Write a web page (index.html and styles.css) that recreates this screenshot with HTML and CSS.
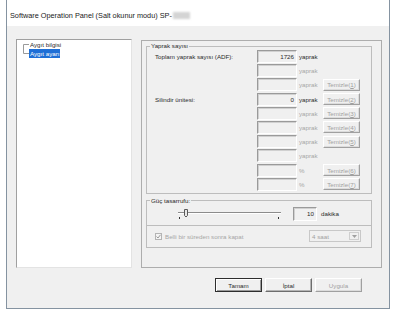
FILE: index.html
```html
<!DOCTYPE html>
<html lang="tr">
<head>
  <meta charset="UTF-8">
  <title>Software Operation Panel</title>
  <link rel="stylesheet" href="styles.css">
</head>
<body>

  <div class="window">
    <div class="titlebar">Software Operation Panel (Salt okunur modu) SP-<span class="redacted"></span></div>

    <div class="dialog">
      <div class="main">

        <!-- device tree -->
        <div class="tree">
          <svg class="tree-lines" width="6" height="19" viewBox="0 0 6 19">
            <path d="M0.5 4.5 H6 M0.5 4.5 V13.5 H6" fill="none" stroke="#9a9a9a" stroke-width="1"/>
          </svg>
          <ul class="tree-list">
            <li>Aygıt bilgisi</li>
            <li><span class="selected">Aygıt ayarı</span></li>
          </ul>
        </div>

        <!-- settings panel -->
        <div class="panel">
          <fieldset class="group">
            <legend>Yaprak sayısı</legend>
            <div class="counter-grid">
              <div class="label">Toplam yaprak sayısı (ADF):</div>
              <div class="box">1726</div>
              <div class="unit">yaprak</div>
              <div></div>

              <div></div>
              <div class="box"></div>
              <div class="unit dim">yaprak</div>
              <div></div>

              <div></div>
              <div class="box"></div>
              <div class="unit dim">yaprak</div>
              <button class="btn-clear" disabled>Temizle(<u>1</u>)</button>

              <div class="label">Silindir ünitesi:</div>
              <div class="box">0</div>
              <div class="unit">yaprak</div>
              <button class="btn-clear" disabled>Temizle(<u>2</u>)</button>

              <div></div>
              <div class="box"></div>
              <div class="unit dim">yaprak</div>
              <button class="btn-clear" disabled>Temizle(<u>3</u>)</button>

              <div></div>
              <div class="box"></div>
              <div class="unit dim">yaprak</div>
              <button class="btn-clear" disabled>Temizle(<u>4</u>)</button>

              <div></div>
              <div class="box"></div>
              <div class="unit dim">yaprak</div>
              <button class="btn-clear" disabled>Temizle(<u>5</u>)</button>

              <div></div>
              <div class="box"></div>
              <div class="unit dim">yaprak</div>
              <div></div>

              <div></div>
              <div class="box"></div>
              <div class="unit dim">%</div>
              <button class="btn-clear" disabled>Temizle(<u>6</u>)</button>

              <div></div>
              <div class="box"></div>
              <div class="unit dim">%</div>
              <button class="btn-clear" disabled>Temizle(<u>7</u>)</button>
            </div>
          </fieldset>

          <fieldset class="group power">
            <legend>Güç tasarrufu:</legend>
            <div class="power-main">
              <svg class="slider" width="108" height="14" viewBox="0 0 108 14">
                <line x1="2" y1="6.5" x2="105" y2="6.5" stroke="#8c8c8c"/>
                <line x1="2" y1="7.5" x2="105" y2="7.5" stroke="#ffffff"/>
                <path d="M8.5 3.5 H11.5 V9.5 L10 11 L8.5 9.5 Z" fill="#e8e8e8" stroke="#5a5a5a"/>
                <line x1="3.5" y1="11" x2="3.5" y2="13" stroke="#333"/>
                <line x1="102.5" y1="11" x2="102.5" y2="13" stroke="#333"/>
              </svg>
              <div class="box minutes">10</div>
              <span class="minutes-unit">dakika</span>
            </div>
            <div class="power-opt">
              <span class="checkbox">
                <svg width="5" height="5" viewBox="0 0 5 5"><path d="M0.5 2.5 L2 4 L4.5 0.8" fill="none" stroke="#9a9a9a" stroke-width="1"/></svg>
              </span>
              <span class="dim">Belli bir süreden sonra kapat</span>
              <div class="combo">
                <span>4 saat</span>
                <span class="combo-arrow">
                  <svg width="5" height="3" viewBox="0 0 5 3"><path d="M0 0 H5 L2.5 3 Z" fill="#a0a0a0"/></svg>
                </span>
              </div>
            </div>
          </fieldset>
        </div>
      </div>

      <div class="dialog-buttons">
        <button class="btn default">Tamam</button>
        <button class="btn">İptal</button>
        <button class="btn" disabled>Uygula</button>
      </div>
    </div>
  </div>

</body>
</html>
```

FILE: styles.css
```css
body {
  margin: 0;
  background: #fff;
  font-family: "Liberation Sans", Arial, sans-serif;
  font-size: 6.2px;
  color: #2a2a2a;
}

.window {
  margin-left: 6px;
  width: 384px;
  height: 309px;
  box-sizing: border-box;
  border: 1px solid #8593a1;
  border-top: none;
  background: #f0f0f0;
  display: flex;
  flex-direction: column;
}

.titlebar {
  height: 26px;
  box-sizing: border-box;
  padding: 4px 0 0 3px;
  background: #fff;
  display: flex;
  align-items: center;
  font-size: 7.3px;
  color: #1a1a1a;
}

.redacted {
  display: inline-block;
  width: 17px;
  height: 7px;
  margin-left: 1px;
  background: #d4d4d4;
  filter: blur(1.2px);
}

.dialog {
  flex: 1;
  padding: 13px 0 0 9px;
  display: flex;
  flex-direction: column;
}

.main {
  display: flex;
  gap: 9px;
  height: 229px;
}

/* tree */
.tree {
  width: 116px;
  box-sizing: border-box;
  background: #fff;
  border: 1px solid;
  border-color: #a0a0a0 #e3e3e3 #e3e3e3 #a0a0a0;
  padding-left: 6px;
  display: flex;
  align-items: flex-start;
}

.tree-list {
  list-style: none;
  margin: 0;
  padding: 0;
}

.tree-list li {
  height: 9px;
  line-height: 9px;
  padding-left: 1px;
}

.tree-list li:last-child {
  padding-left: 0;
}

.selected {
  display: inline-block;
  padding: 0 1px;
  background: #1f6fd6;
  color: #fff;
}

/* right panel */
.panel {
  width: 241px;
  height: 228px;
  margin-top: 1px;
  box-sizing: border-box;
  border: 1px solid #adadad;
  padding: 1px 9px 0 4px;
}

.group {
  margin: 0;
  padding: 0;
  min-width: 0;
  border: 1px solid #bdbdbd;
}

.group legend {
  margin-left: 3px;
  padding: 0 1px;
  line-height: 8px;
}

.counter-grid {
  display: grid;
  grid-template-columns: 102px 40px 26px 38px;
  grid-auto-rows: 13px;
  row-gap: 1.2px;
  align-items: center;
  padding: 0 0 2px 8px;
}

.box {
  height: 13px;
  box-sizing: border-box;
  border: 1px solid;
  border-color: #9a9a9a #fff #fff #9a9a9a;
  box-shadow: inset 1px 1px 0 #d0d0d0;
  padding-right: 2px;
  line-height: 11px;
  text-align: right;
}

.unit {
  padding-left: 2px;
}

.dim {
  color: #a6a6a6;
}

.btn-clear {
  width: 37px;
  height: 12px;
  padding: 0;
  font-family: inherit;
  font-size: 6.2px;
  color: #a0a0a0;
  background: #f0f0f0;
  border: 1px solid;
  border-color: #fff #a0a0a0 #a0a0a0 #fff;
  box-shadow: inset -1px -1px 0 #dcdcdc;
}

.power {
  margin-top: 3px;
}

.power-main {
  height: 20px;
  display: flex;
  align-items: flex-start;
  border-bottom: 1px solid #bdbdbd;
}

.slider {
  margin: 1px 0 0 29px;
}

.minutes {
  width: 24px;
  height: 14px;
  margin: 2px 0 0 9px;
  line-height: 12px;
}

.minutes-unit {
  margin: 2px 0 0 4px;
  line-height: 14px;
}

.power-opt {
  height: 21px;
  display: flex;
  align-items: center;
  padding-left: 8px;
}

.checkbox {
  width: 7px;
  height: 7px;
  box-sizing: border-box;
  border: 1px solid #b4b4b4;
  background: #f4f4f4;
  margin-right: 3px;
  display: flex;
  align-items: center;
  justify-content: center;
}

.checkbox svg {
  display: block;
}

.combo {
  margin: 0 10px 0 auto;
  width: 52px;
  height: 12px;
  box-sizing: border-box;
  border: 1px solid #c8c8c8;
  background: #f0f0f0;
  color: #a0a0a0;
  display: flex;
  align-items: center;
  justify-content: space-between;
  padding: 0 1px 0 2px;
}

.combo-arrow {
  width: 10px;
  height: 8px;
  box-sizing: border-box;
  border: 1px solid #cfcfcf;
  display: flex;
  align-items: center;
  justify-content: center;
}

.combo-arrow svg {
  display: block;
}

/* bottom buttons */
.dialog-buttons {
  display: flex;
  justify-content: flex-end;
  gap: 3px;
  margin-top: 10px;
  padding-right: 27px;
}

.btn {
  width: 47px;
  height: 14px;
  padding: 0;
  font-family: inherit;
  font-size: 6.2px;
  color: #2a2a2a;
  background: #f0f0f0;
  border: 1px solid;
  border-color: #fff #6d6d6d #6d6d6d #fff;
  box-shadow: inset -1px -1px 0 #b4b4b4;
}

.btn.default {
  border-color: #2e2e2e;
  box-shadow: inset 1px 1px 0 #fff, inset -1px -1px 0 #9a9a9a;
}

.btn:disabled {
  color: #a0a0a0;
  border-color: #fff #a0a0a0 #a0a0a0 #fff;
  box-shadow: inset -1px -1px 0 #dcdcdc;
}
```
